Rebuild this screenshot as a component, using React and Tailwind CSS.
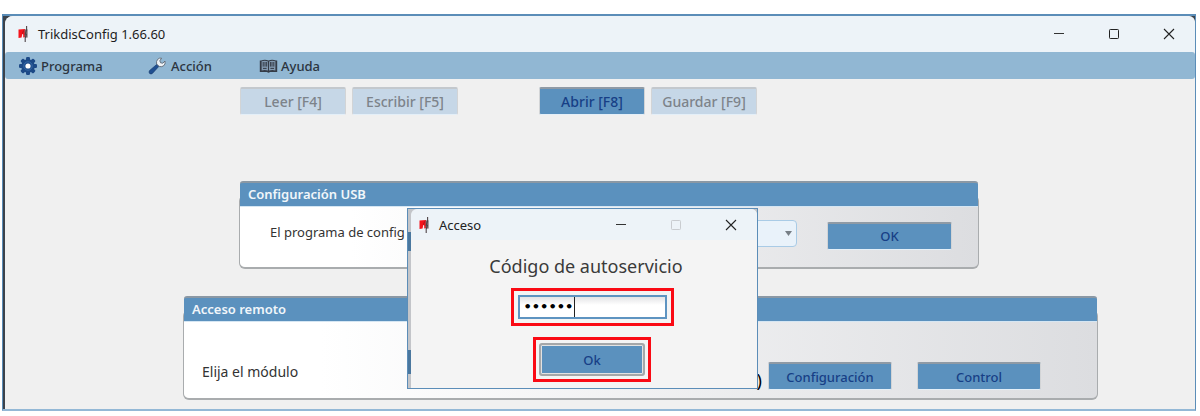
import React from 'react';

const TrikdisLogo = () => (
  <svg width="12" height="16" viewBox="0 0 12 16" className="shrink-0" aria-hidden="true">
    <path d="M.5 3.6 7 3V11L5.2 11.4V8.4L4.2 8 3.6 11.6 .5 12Z" fill="#f5141c" />
    <path d="M6.6 3.4H9.6V11.6H6.6Z" fill="#7b6a6f" />
    <path d="M8.6 0V4L7.2 8.2H8.4L7.2 12V16" fill="none" stroke="#4f4448" strokeWidth="1.1" />
    <path d="M5.6 4.4 4.4 7.6" fill="none" stroke="#a3141c" strokeWidth="0.9" />
  </svg>
);

const GearIcon = () => (
  <svg width="20" height="20" viewBox="0 0 20 20" className="shrink-0" aria-hidden="true">
    <g fill="#1d4a87">
      <rect x="8" y="1" width="4" height="18" rx="1.2" />
      <rect x="8" y="1" width="4" height="18" rx="1.2" transform="rotate(45 10 10)" />
      <rect x="8" y="1" width="4" height="18" rx="1.2" transform="rotate(90 10 10)" />
      <rect x="8" y="1" width="4" height="18" rx="1.2" transform="rotate(135 10 10)" />
      <circle cx="10" cy="10" r="6.8" />
    </g>
    <circle cx="10" cy="10" r="4.2" fill="none" stroke="#356aa8" strokeWidth="1" />
    <circle cx="10" cy="10" r="2.6" fill="#fff" />
  </svg>
);

const WrenchIcon = () => (
  <svg width="18" height="18" viewBox="0 0 18 18" className="shrink-0" aria-hidden="true">
    <path d="M9 7.2 11 9.2 4.4 16.4Q3 17.6 1.6 16.4 .4 15 1.6 13.6Z" fill="#1f4f91" stroke="#1b3f70" strokeWidth="0.7" />
    <path d="M13.6 1.2 11.8 3.8 12.6 5.8 14.8 6.2 17 4Q17.8 7.4 15.4 9 13.4 10.2 11.2 9.4L8.6 7Q8 4.4 9.6 2.4 11.4.6 13.6 1.2Z" fill="#eef2f6" stroke="#5d6874" strokeWidth="0.9" />
  </svg>
);

const BookIcon = () => (
  <svg width="19" height="16" viewBox="0 0 19 16" className="shrink-0" aria-hidden="true">
    <path d="M.8 2.6H2Q6 .8 9.5 2.6 13 .8 17 2.6H18.2V14H11Q9.5 15.4 8 14H.8Z" fill="#343b46" />
    <path d="M2.6 3.2Q6 2 9 3.4V12.6Q6 11.4 2.6 12.4ZM16.4 3.2Q13 2 10 3.4V12.6Q13 11.4 16.4 12.4Z" fill="#8299b0" />
    <path d="M4.2 4V8.6M6 4V8.6M7.7 4V8.6M11.4 4V8.6M13 4V8.6M14.8 4V8.6M4 10.4H7.6M11.4 10.4H15" stroke="#343b46" strokeWidth="1" />
  </svg>
);

const WindowControls = ({ dimmed }) => (
  <div className="flex gap-[37px]">
    <button type="button" aria-label="Minimizar" className="flex h-5 w-[18px] items-center justify-center">
      <svg width="12" height="12" viewBox="0 0 12 12" fill="none" stroke="#333">
        <path d="M1 5.5H11" />
      </svg>
    </button>
    <button type="button" aria-label="Maximizar" className="flex h-5 w-[18px] items-center justify-center">
      <svg width="12" height="12" viewBox="0 0 12 12" fill="none" stroke={dimmed ? '#c9ccd0' : '#222'}>
        <rect x="1.5" y="1.5" width="9" height="9" rx="0.8" />
      </svg>
    </button>
    <button type="button" aria-label="Cerrar" className="flex h-5 w-[18px] items-center justify-center">
      <svg width="12" height="12" viewBox="0 0 12 12" fill="none" stroke="#222" strokeWidth="1.1">
        <path d="M1 1 11 11M11 1 1 11" />
      </svg>
    </button>
  </div>
);

const MenuItem = ({ icon, label, className }) => (
  <button type="button" className={`flex items-center text-left font-medium text-[#2c3540] ${className}`}>
    {icon}
    {label}
  </button>
);

const ActionButton = ({ children, className, disabled }) => (
  <button
    type="button"
    disabled={disabled}
    className={`h-7 shrink-0 rounded-[2px] border-x border-t-2 border-b border-x-[#d2d4d6] border-b-[#e4eff8] font-medium ${
      disabled ? 'border-t-[#c3c8cd] bg-[#c6d7e7] text-[#7d838a]' : 'border-t-[#8f9aa5] bg-[#5b91be] text-[#173f86]'
    } ${className}`}
  >
    {children}
  </button>
);

const Panel = ({ title, children, className }) => (
  <section className={className}>
    <h2 className="relative mx-px h-[26px] rounded-t-[3px] border-t-2 border-b border-t-[#8b98a4] border-b-[#d5e6f3] bg-[#5b91be] pl-2 leading-[23px] font-semibold text-[#f1f6fa]">
      {title}
    </h2>
    <div className="-mt-3 rounded-md border-x border-b-2 border-[#a9acae] bg-linear-to-r from-white from-15% to-[#dcdde0] pt-3">
      {children}
    </div>
  </section>
);

const AccessDialog = () => (
  <div
    role="dialog"
    aria-labelledby="acceso-title"
    className="absolute top-[192px] left-[404px] w-[351px] border border-[#5b8db8] bg-[#c3c5c9] pl-[3px]"
  >
    {/* edges of the buttons that show beside the dialog */}
    <span className="absolute top-[23px] left-0 h-[19px] w-[3px] bg-[#4a779e]" />
    <span className="absolute top-[141px] left-0 h-6 w-[3px] bg-[#4a779e]" />
    <div className="rounded-tl-lg rounded-tr-md bg-[#f4f4f4] pb-[6px]">
      <div className="flex h-[31px] items-center rounded-t-md bg-[#edf3f8] pr-[17px] pl-2">
        <TrikdisLogo />
        <span id="acceso-title" className="ml-2 flex-1 text-[#222]">Acceso</span>
        <WindowControls dimmed />
      </div>
      <form className="flex flex-col items-center pl-4">
        <label htmlFor="codigo" className="mt-[14px] mr-3 text-[18px] leading-6 text-[#3a3a3a]">
          Código de autoservicio
        </label>
        <div className="mt-[10px] border-[3px] border-[#fa0a14] p-1">
          <div className="flex h-6 w-[149px] items-center border-2 border-[#5e94c1] bg-linear-to-b from-[#e4e4e6] to-white to-40% pl-1">
            <input
              id="codigo"
              type="password"
              defaultValue="123456"
              className="h-5 w-[51px] border-r border-[#222] font-['DejaVu_Sans',sans-serif] text-[13px] leading-5 font-bold text-black outline-none"
            />
          </div>
        </div>
        <div className="mt-[11px] border-[3px] border-[#fa0a14] p-[3px]">
          <button
            type="button"
            className="block h-[33px] w-[106px] rounded-[3px] border-2 border-[#a5a7a9] bg-[#5b91be] text-[13px] font-medium text-[#173f86] ring-1 ring-[#e2e2e2] ring-inset"
          >
            Ok
          </button>
        </div>
      </form>
    </div>
  </div>
);

export default function App() {
  return (
    <div className="bg-white pt-[14px] pr-1 pb-1 pl-0.5 font-['Noto_Sans',sans-serif] text-[13px] leading-5">
      <div className="relative border-t-2 border-r border-b-2 border-l border-[#5b8db8] border-b-[#93b8d6] bg-[#3b424b] pl-0.5">
        <div className="rounded-tl-lg rounded-tr-md bg-[#f0f0f0]">
          <header className="flex h-9 items-center rounded-t-lg bg-[#edf3f8] pr-[17px] pl-[13px]">
            <TrikdisLogo />
            <h1 className="ml-2 flex-1 text-[#1d1d1d]">TrikdisConfig 1.66.60</h1>
            <WindowControls />
          </header>

          <nav className="flex h-[27px] items-center rounded-[3px] bg-[#91b7d3] pl-[13px]">
            <MenuItem icon={<GearIcon />} label="Programa" className="w-[130px] gap-[3px]" />
            <MenuItem icon={<WrenchIcon />} label="Acción" className="w-[111px] gap-[5px]" />
            <MenuItem icon={<BookIcon />} label="Ayuda" className="w-[80px] gap-[3px]" />
          </nav>

          <main className="pt-2 pb-[9px]">
            <div className="flex gap-[6px] pl-[235px] text-[14px]">
              <ActionButton disabled className="w-[106px]">Leer [F4]</ActionButton>
              <ActionButton disabled className="w-[106px]">Escribir [F5]</ActionButton>
              <ActionButton className="ml-[75px] w-[106px]">Abrir [F8]</ActionButton>
              <ActionButton disabled className="w-[106px]">Guardar [F9]</ActionButton>
            </div>

            <Panel title="Configuración USB" className="mt-[66px] mr-[216px] ml-[234px]">
              <div className="flex h-[60px] items-center pr-[26px] pb-[3px] pl-[30px]">
                <p className="shrink-0 pb-2 whitespace-nowrap text-[#333]">El programa de config</p>
                <div className="relative ml-auto flex pb-1">
                  <select
                    aria-label="Puerto"
                    className="h-[27px] w-[200px] appearance-none rounded-[4px] border border-[#a9cbe6] bg-[#e9f2fa]"
                  />
                  <svg width="7" height="5" viewBox="0 0 7 5" className="pointer-events-none absolute top-[11px] right-[5px]">
                    <path d="M0 0H7L3.5 5Z" fill="#777f86" />
                  </svg>
                </div>
                <ActionButton className="ml-[30px] w-[125px]">OK</ActionButton>
              </div>
            </Panel>

            <Panel title="Acceso remoto" className="mt-[27px] mr-[97px] ml-[178px]">
              <div className="flex h-[76px] items-end pr-[56px] pb-[8px] pl-[18px]">
                <p className="pb-2 text-[14px] text-[#333]">Elija el módulo</p>
                <span className="ml-auto text-[18px] text-black">)</span>
                <ActionButton className="ml-1.5 w-[124px]">Configuración</ActionButton>
                <ActionButton className="ml-[25px] w-[124px]">Control</ActionButton>
              </div>
            </Panel>
          </main>
        </div>

        <AccessDialog />
      </div>
    </div>
  );
}
